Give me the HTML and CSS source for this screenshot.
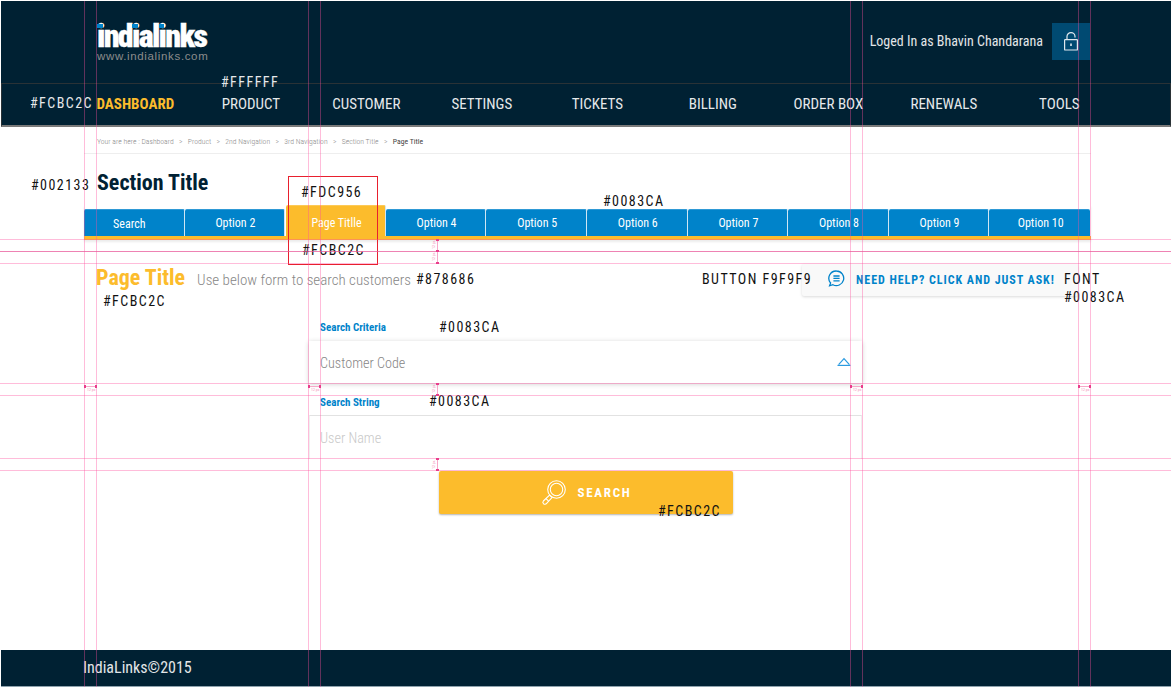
FILE: index.html
```html
<!DOCTYPE html>
<html lang="en">
<head>
  <meta charset="UTF-8" />
  <meta name="viewport" content="width=device-width, initial-scale=1.0" />
  <title>Indialinks - Search customers</title>
  <link rel="stylesheet" href="styles.css">
</head>
<body>
  <div class="page">
    <header class="top">
      <div class="logo">
        <div class="logo-name"><span class="logo-i">i</span>nd<span class="logo-i">i</span>al<span class="logo-i">i</span>nks</div>
        <div class="logo-url">www.indialinks.com</div>
      </div>
      <div class="user">
        <span>Loged In as Bhavin Chandarana</span>
        <button class="lock" aria-label="Log out">
          <svg width="16" height="19" viewBox="0 0 16 19" fill="none" stroke="#dfe8ee" stroke-width="1.2">
            <rect x="1.6" y="7.6" width="12.8" height="10.4" rx="0.6"/>
            <path d="M4 7.6V4.6a4 4 0 0 1 8 0V5.6"/>
            <path d="M8 11.5v2.6" stroke-width="1.6"/>
          </svg>
        </button>
      </div>
    </header>

    <nav class="nav">
      <a class="active">DASHBOARD</a>
      <a>PRODUCT</a>
      <a>CUSTOMER</a>
      <a>SETTINGS</a>
      <a>TICKETS</a>
      <a>BILLING</a>
      <a>ORDER BOX</a>
      <a>RENEWALS</a>
      <a>TOOLS</a>
    </nav>

    <main class="content">
      <div class="crumbs">
        <span>Your are here : Dashboard</span><i>&gt;</i>
        <span>Product</span><i>&gt;</i>
        <span>2nd Navigation</span><i>&gt;</i>
        <span>3rd Navigation</span><i>&gt;</i>
        <span>Section Title</span><i>&gt;</i>
        <b>Page Title</b>
      </div>

      <h2 class="section-title">Section Title</h2>

      <div class="tabs">
        <a class="tab first">Search</a>
        <a class="tab">Option 2</a>
        <a class="tab current">Page Titlle</a>
        <a class="tab">Option 4</a>
        <a class="tab">Option 5</a>
        <a class="tab">Option 6</a>
        <a class="tab">Option 7</a>
        <a class="tab">Option 8</a>
        <a class="tab">Option 9</a>
        <a class="tab">Option 10</a>
      </div>

      <div class="title-row">
        <h1 class="page-title">Page Title</h1>
        <span class="page-sub">Use below form to search customers</span>
        <button class="help">
          <svg width="17" height="17" viewBox="0 0 17 17" fill="none" stroke="#0083ca" stroke-width="1.3">
            <path d="M8.5 1a7.3 7.3 0 1 1-3.6 13.7L1.6 15.8l1-2.8A7.3 7.3 0 0 1 8.5 1z"/>
            <path d="M5.4 6h6.2M5.4 8.4h6.2M5.4 10.8h6.2"/>
          </svg>
          NEED HELP? CLICK AND JUST ASK!
        </button>
      </div>

      <form class="search-form">
        <label class="field-label">Search Criteria</label>
        <div class="select-box">
          <span>Customer Code</span>
          <svg width="14" height="9" viewBox="0 0 14 9" fill="none" stroke="#2b9be0" stroke-width="1.2">
            <path d="M1.6 7.6L7 1.6l5.4 6"/>
            <path d="M0.5 8.4h13"/>
          </svg>
        </div>
        <label class="field-label second">Search String</label>
        <div class="text-box">User Name</div>
        <button type="button" class="search-btn">
          <svg width="26" height="25" viewBox="0 0 26 25" fill="none" stroke="#fff" stroke-width="1.1">
            <circle cx="15.5" cy="9.5" r="8.8"/>
            <circle cx="15.5" cy="9.5" r="6.2"/>
            <path d="M8.6 15l2.4 2.6-5.6 6a1.9 1.9 0 0 1-3-2.6z"/>
            <path d="M5 18.6l2.6 2.6"/>
          </svg>
          SEARCH
        </button>
      </form>
    </main>

    <footer class="bottom">IndiaLinks©2015</footer>
  </div>

  <!-- spec notes from the designer, sitting over the comp -->
  <span class="note n-dash">#FCBC2C</span>
  <span class="note n-white">#FFFFFF</span>
  <span class="note n-section">#002133</span>
  <span class="note n-fdc">#FDC956</span>
  <span class="note n-tabblue">#0083CA</span>
  <span class="note n-fcb">#FCBC2C</span>
  <span class="note n-title">#FCBC2C</span>
  <span class="note n-grey">#878686</span>
  <span class="note n-btn">BUTTON F9F9F9</span>
  <span class="note n-font">FONT<br>#0083CA</span>
  <span class="note n-crit">#0083CA</span>
  <span class="note n-str">#0083CA</span>
  <span class="note n-search">#FCBC2C</span>
  <div class="red-box"></div>

  <svg class="guides" width="1171" height="687" viewBox="0 0 1171 687" shape-rendering="crispEdges">
    <g stroke="#ff4f9e" stroke-opacity="0.38">
      <path d="M84.5 1V687M96.5 1V687M308.5 1V687M320.5 1V687M850.5 1V687M862.5 1V687M1078.5 1V687M1090.5 1V687"/>
      <path d="M0 239.5H1171M0 263.5H1171M0 383.5H1171M0 395.5H1171M0 458.5H1171M0 470.5H1171"/>
    </g>
    <path d="M0 251.5H1171" stroke="#e8589a" stroke-opacity="0.75"/>
    <g stroke="#f7a8c8">
      <path d="M437.5 240V263M437.5 384V395M437.5 459V471"/>
      <path d="M85 386.5H96M309 386.5H320M851 386.5H862M1079 386.5H1090"/>
    </g>
    <g fill="#e83e8c">
      <path d="M436 239h3v2h-3zM436 250h3v2h-3zM436 262h3v2h-3zM436 383h3v2h-3zM436 394h3v2h-3zM436 458h3v2h-3zM436 469h3v2h-3z"/>
      <path d="M84 385h2v3h-2zM95 385h2v3h-2zM308 385h2v3h-2zM319 385h2v3h-2zM850 385h2v3h-2zM861 385h2v3h-2zM1078 385h2v3h-2zM1089 385h2v3h-2z"/>
    </g>
    <g class="guide-label">
      <text x="87" y="391">12 px</text>
      <text x="311" y="391">12 px</text>
      <text x="853" y="391">12 px</text>
      <text x="1081" y="391">12 px</text>
      <text transform="translate(435 249) rotate(-90)">12 px</text>
      <text transform="translate(435 261) rotate(-90)">12 px</text>
      <text transform="translate(435 393) rotate(-90)">12 px</text>
      <text transform="translate(435 469) rotate(-90)">12 px</text>
    </g>
  </svg>
</body>
</html>
```

FILE: styles.css
```css
:root {
  --navy: #002133;
  --blue: #0083ca;
  --yellow: #fcbc2c;
  --grey: #878686;
}

* {
  box-sizing: border-box;
}

body {
  margin: 0;
  background: #fff;
  font-family: "Roboto Condensed", Roboto, sans-serif;
  font-stretch: condensed;
  color: var(--navy);
  overflow: hidden;
}

.page {
  width: 1171px;
  height: 687px;
  padding: 1px 0 0 1px;
  display: flex;
  flex-direction: column;
}

.top {
  height: 82px;
  background: var(--navy);
  display: flex;
  justify-content: space-between;
  padding: 22px 81px 0 96px;
}

.logo-name {
  font-weight: 900;
  font-size: 32px;
  line-height: 26px;
  letter-spacing: -1.7px;
  color: #fff;
  -webkit-text-stroke: 0.3px #fff;
}

.logo-i {
  position: relative;
}

.logo-i::before {
  content: "";
  position: absolute;
  left: 0;
  right: 1px;
  top: 7px;
  height: 4px;
  background: var(--blue);
}

.logo-url {
  font-family: "Liberation Sans", sans-serif;
  font-stretch: normal;
  font-size: 11.5px;
  letter-spacing: 0.65px;
  color: #8c8c8c;
  margin-top: 1px;
}

.user {
  display: flex;
  align-items: flex-start;
  gap: 9px;
  color: #e3e6e8;
  font-size: 14px;
}

.user span {
  padding-top: 10px;
}

.lock {
  width: 38px;
  height: 37px;
  border: none;
  background: #004a72;
  display: flex;
  align-items: center;
  justify-content: center;
}

.nav {
  height: 44px;
  flex: none;
  background: var(--navy);
  border: 1px solid #2a3236;
  border-bottom: 2px solid #7a7a7a;
  display: grid;
  grid-template-columns: repeat(9, 115.5px);
  padding: 0 0 2px 75.6px;
  align-items: center;
  font-size: 15px;
  color: #e6e9eb;
  text-align: center;
}

.nav .active {
  color: var(--yellow);
  font-weight: 700;
}

.content {
  flex: 1;
  padding-left: 83px;
  width: 1090px;
}

.crumbs {
  height: 27px;
  border-bottom: 1px solid #eee;
  padding: 10px 0 0 13px;
  font-size: 7.7px;
  font-weight: 300;
  color: #8a8a8a;
  display: flex;
  gap: 5.3px;
  margin-bottom: 17px;
}

.crumbs i {
  font-style: normal;
}

.crumbs b {
  color: #444;
}

.section-title {
  margin: 0 0 10px 13px;
  font-size: 22px;
  line-height: 24px;
  font-weight: 700;
  color: var(--navy);
}

.tabs {
  display: grid;
  grid-template-columns: repeat(10, 100.6px);
  height: 35px;
  border-bottom: 4px solid var(--yellow);
  box-shadow: 0 2px 2px rgba(0, 0, 0, 0.08);
  align-items: end;
}

.tab {
  height: 27px;
  background: var(--blue);
  border-top: 1px solid #2f9ad6;
  border-right: 1px solid #cfe6f4;
  border-radius: 2px 2px 0 0;
  padding-left: 2px;
  color: #fff;
  font-size: 12px;
  line-height: 26px;
  text-align: center;
}

.tab:last-child {
  border-right: none;
}

.tab.first {
  line-height: 28px;
  padding: 0 9px 0 0;
}

.tab.current {
  height: 31px;
  background: var(--yellow);
  border-top-color: #fdc956;
  color: #fff;
  line-height: 34px;
  margin-left: 1px;
}

.title-row {
  display: flex;
  align-items: center;
  height: 32px;
  margin: 24px 0 0 12px;
  width: 982px;
}

.page-title {
  margin: 0 0 6px;
  font-size: 22px;
  font-weight: 700;
  color: var(--yellow);
}

.page-sub {
  margin-left: 12px;
  font-size: 15px;
  font-weight: 300;
  color: var(--grey);
}

.help {
  margin-left: auto;
  height: 32px;
  width: 276px;
  border: none;
  border-radius: 2px;
  background: #f9f9f9;
  box-shadow: 0 1px 3px rgba(0, 0, 0, 0.15);
  display: flex;
  align-items: center;
  gap: 11px;
  padding-left: 26px;
  color: var(--blue);
  font-family: inherit;
  font-stretch: inherit;
  font-size: 12px;
  font-weight: 700;
  letter-spacing: 0.95px;
}

.help svg {
  margin-bottom: 4px;
}

.search-form {
  margin: 25px 0 0 225px;
  width: 553px;
}

.field-label {
  display: block;
  padding-left: 11px;
  font-size: 11px;
  font-weight: 700;
  color: var(--blue);
  line-height: 14px;
  margin-bottom: 6px;
}

.field-label.second {
  margin: 13px 0 5px;
}

.select-box {
  height: 42px;
  padding: 1px 11px 0;
  background: #fff;
  box-shadow: 0 1px 5px rgba(0, 0, 0, 0.2);
  display: flex;
  align-items: center;
  justify-content: space-between;
  font-size: 14.2px;
  font-weight: 300;
  color: var(--grey);
}

.select-box svg {
  margin-bottom: 2px;
}

.text-box {
  height: 44px;
  padding: 0 10px;
  border: 1px solid #efefef;
  border-top-color: #e2e2e2;
  border-bottom: none;
  display: flex;
  align-items: center;
  font-size: 14.2px;
  font-weight: 300;
  color: #c9c9c9;
}

.search-btn {
  display: flex;
  align-items: center;
  justify-content: center;
  gap: 11px;
  margin: 12px 0 0 130px;
  width: 294px;
  height: 43px;
  border: none;
  border-radius: 2px;
  background: var(--yellow);
  box-shadow: 0 1px 2px rgba(0, 0, 0, 0.3);
  color: #fff;
  font-family: inherit;
  font-stretch: inherit;
  font-size: 13px;
  font-weight: 700;
  letter-spacing: 1.7px;
}

.bottom {
  margin-top: auto;
  height: 37px;
  background: var(--navy);
  border-bottom: 1px solid #8fa3ae;
  color: #e3e6e8;
  font-size: 16px;
  line-height: 36px;
  padding-left: 82px;
}

/* overlays: the designer's notes and guides */
.note {
  position: absolute;
  font-size: 14px;
  line-height: 18px;
  letter-spacing: 1.45px;
  color: #111;
  white-space: nowrap;
}

.n-dash { left: 30px; top: 94px; color: #e6e9eb; }
.n-white { left: 221px; top: 73px; color: #e6e9eb; }
.n-section { left: 31px; top: 176px; }
.n-fdc { left: 301px; top: 183px; }
.n-tabblue { left: 603px; top: 192px; }
.n-fcb { left: 302px; top: 241px; }
.n-title { left: 103px; top: 292px; }
.n-grey { left: 416px; top: 270px; }
.n-btn { left: 702px; top: 270px; }
.n-font { left: 1064px; top: 270px; }
.n-crit { left: 439px; top: 318px; }
.n-str { left: 429px; top: 392px; }
.n-search { left: 658px; top: 502px; }

.red-box {
  position: absolute;
  left: 288px;
  top: 176px;
  width: 90px;
  height: 89px;
  border: 1px solid #e8202e;
}

.guides {
  position: absolute;
  left: 0;
  top: 0;
  pointer-events: none;
}

.guide-label text {
  font-size: 4px;
  fill: #f48fb8;
}
```
